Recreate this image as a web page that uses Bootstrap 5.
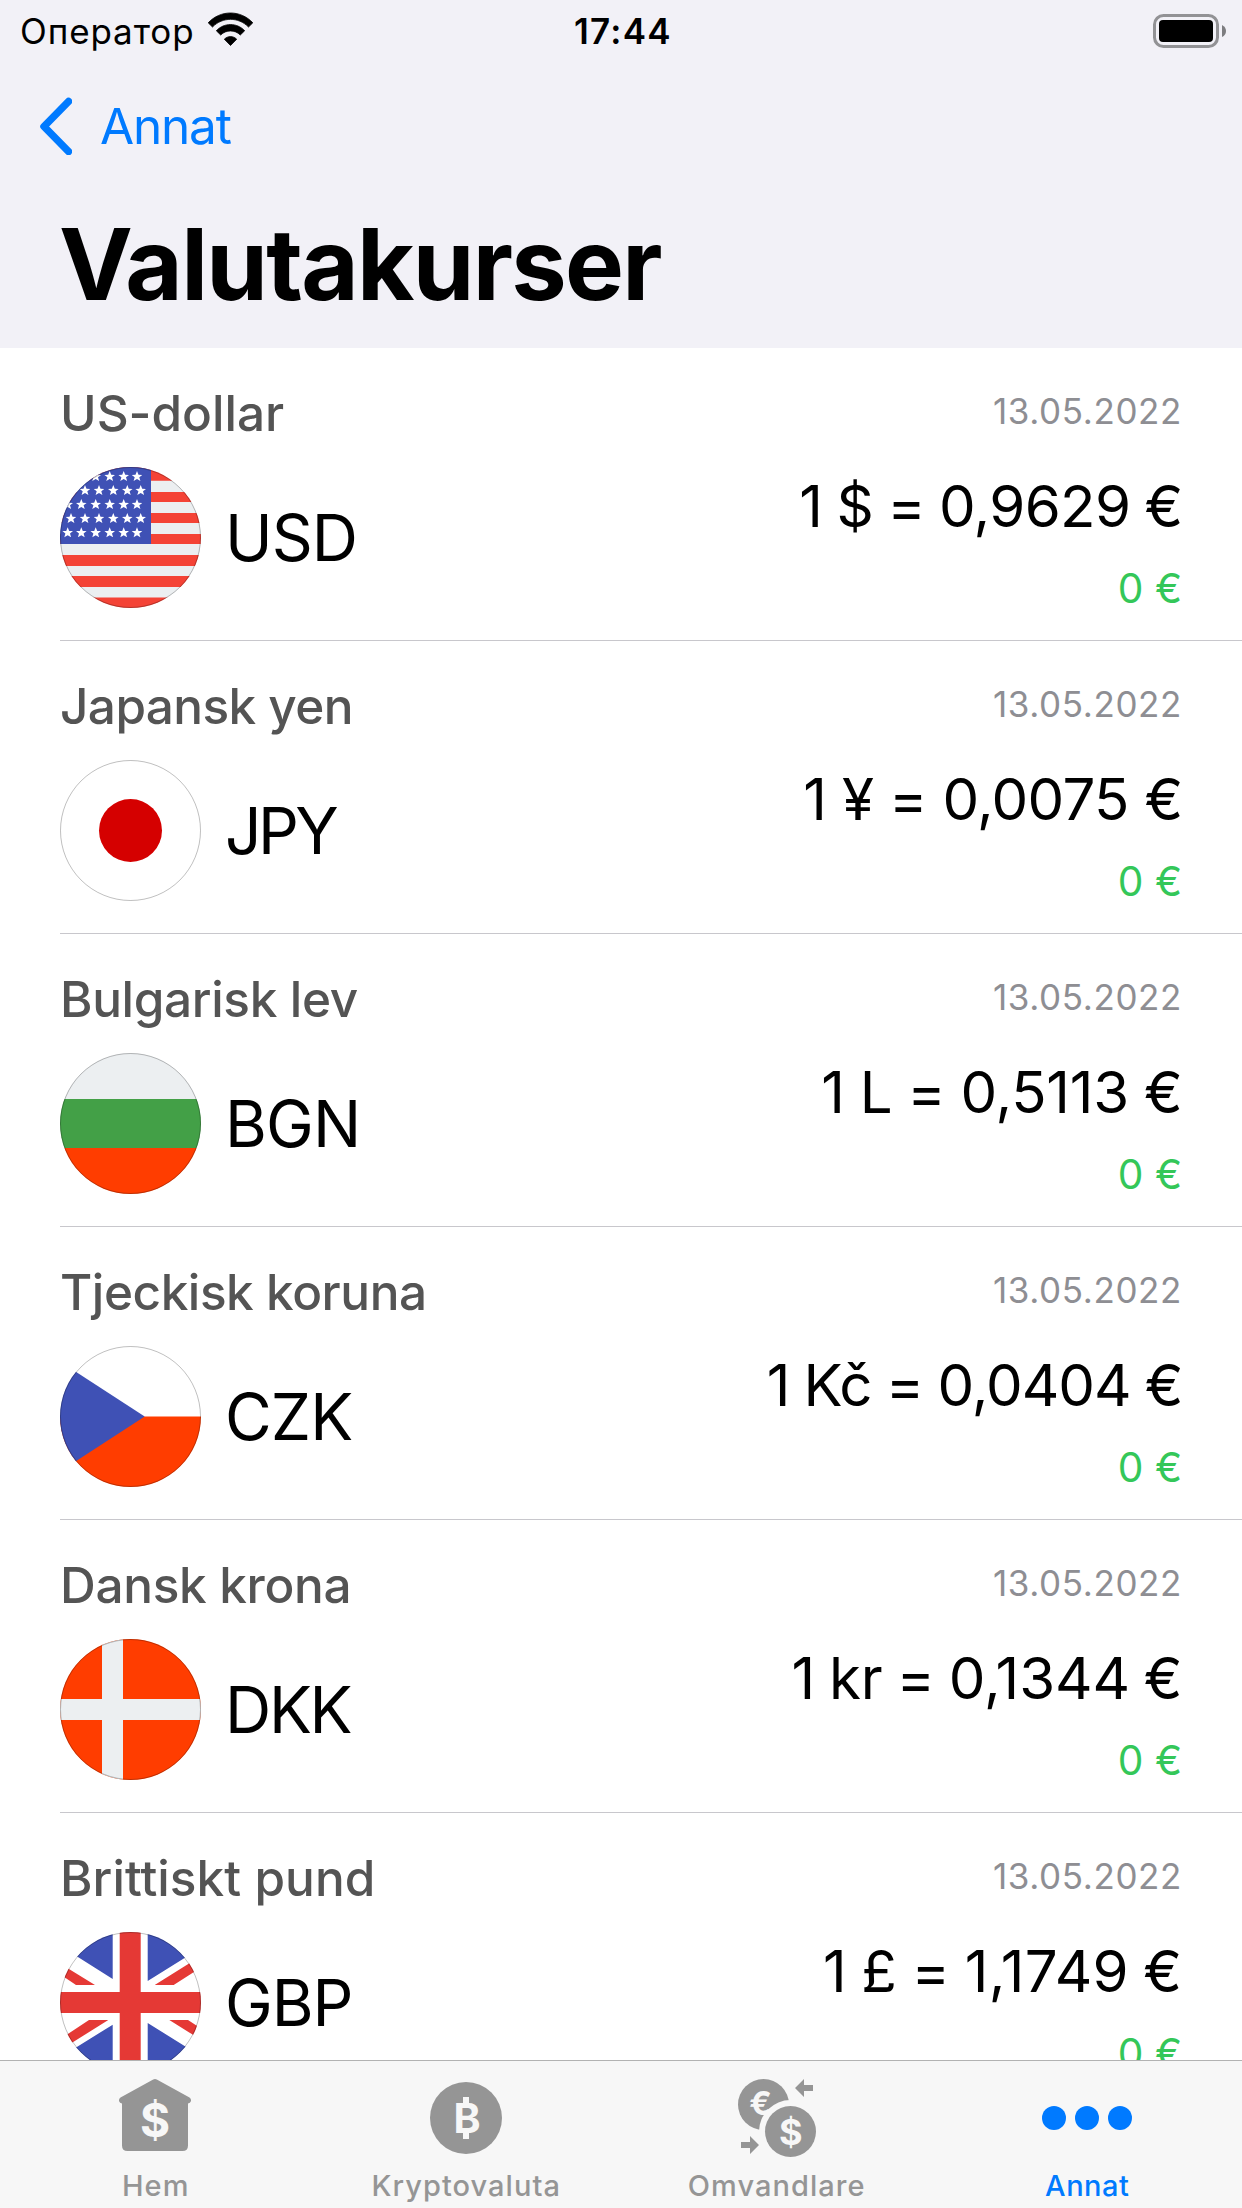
<!DOCTYPE html>
<html lang="sv">
<head>
<meta charset="utf-8">
<meta name="viewport" content="width=device-width, initial-scale=1">
<title>Valutakurser</title>
<link href="https://cdn.jsdelivr.net/npm/bootstrap@5.3.0/dist/css/bootstrap.min.css" rel="stylesheet">
<style>
  body { font-family: Inter, "Noto Sans", sans-serif; color: #000; background: #fff; }
  svg { display: block; flex: none; }
  .phone { width: 1242px; height: 2208px; }
  .app-head { background: #f2f1f7; height: 348px; }
  .status-bar { height: 62px; padding: 0 16px 0 20px; font-size: 35px; line-height: 62px; }
  .status-bar > div { flex: 1 1 0; }
  .carrier { letter-spacing: .9px; }
  .wifi { margin: -4px 0 0 12px; }
  .battery { margin-top: -1px; }
  .clock { font-weight: 600; letter-spacing: 1.26px; }
  .back-row { height: 132px; padding: 0 0 4px 39px; color: #007aff; font-size: 49.5px; letter-spacing: -1.2px; }
  .back-text { margin-left: 28px; }
  .screen-title { font-size: 99px; font-weight: 700; line-height: 120px; letter-spacing: -1.7px; padding: 10px 0 0 59px; }
  .rates { height: 1712px; }
  .rate-row { height: 293px; margin-left: 60px; padding-right: 62px; border-bottom: 1px solid #c8c7cc; }
  .cur-name { margin-top: 34px; font-size: 49.5px; line-height: 62px; font-weight: 500; color: #545454; }
  .cur-code { font-size: 64px; line-height: 78px; margin-left: 24px; }
  .flag-line { margin-top: 23px; }
  .cur-date { margin-top: 41px; font-size: 35px; line-height: 44px; letter-spacing: .61px; color: #8e8e93; margin-right: -2px; }
  .cur-rate { margin-top: 38px; font-size: 58.2px; line-height: 70px; margin-right: -2.5px; word-spacing: -1.6px; }
  .cur-delta { margin-top: 23px; font-size: 40.7px; line-height: 50px; color: #34c759; margin-right: -2px; }
  .r-usd .cur-name { letter-spacing: 0; }      .r-usd .cur-code { letter-spacing: -1px; }   .r-usd .cur-rate { letter-spacing: -.68px; }
  .r-jpy .cur-name { letter-spacing: -.6px; }  .r-jpy .cur-code { letter-spacing: -3.6px; } .r-jpy .cur-rate { letter-spacing: -.7px; word-spacing: 0; }
  .r-bgn .cur-name { letter-spacing: -.35px; } .r-bgn .cur-code { letter-spacing: -.8px; }  .r-bgn .cur-rate { letter-spacing: -.2px; word-spacing: -1.3px; }
  .r-czk .cur-name { letter-spacing: -.45px; } .r-czk .cur-code { letter-spacing: -.9px; }  .r-czk .cur-rate { letter-spacing: -1px; word-spacing: -1.2px; }
  .r-dkk .cur-name { letter-spacing: -.32px; } .r-dkk .cur-code { letter-spacing: -2.3px; } .r-dkk .cur-rate { letter-spacing: -.1px; word-spacing: -2.4px; }
  .r-gbp .cur-name { letter-spacing: .05px; }  .r-gbp .cur-code { letter-spacing: -1.1px; } .r-gbp .cur-rate { letter-spacing: .35px; word-spacing: -2.4px; }
  .tab-bar { height: 148px; background: #f7f7f7; border-top: 1px solid #b2b2b2; color: #959595; }
  .tab-bar a { flex: 1 1 0; color: inherit; padding-top: 18px; text-decoration: none; }
  .tab-bar a.current { color: #007aff; }
  .tab-text { font-size: 29px; line-height: 36px; font-weight: 500; margin: 11px 0 0 1px; letter-spacing: 1.05px; }
  .current .tab-text { letter-spacing: .52px; }
  .swap-icon { margin-left: 2px; }
</style>
<script src="https://cdn.jsdelivr.net/npm/bootstrap@5.3.0/dist/js/bootstrap.bundle.min.js"></script>
</head>
<body>
<svg width="0" height="0" class="position-absolute"><defs>
  <clipPath id="disc"><circle cx="70.5" cy="70.5" r="70.5"/></clipPath>
  <path id="star" fill="#fff" d="M0-5.4 1.5-1.8 5.3-1.6 2.3.8 3.4 4.6 0 2.5-3.4 4.6-2.3.8-5.3-1.6-1.5-1.8Z"/>
  <circle id="rim" cx="70.5" cy="70.5" r="70" fill="none" stroke="#000" stroke-opacity=".25"/>
</defs></svg>

<div class="phone d-flex flex-column overflow-hidden">
  <header class="app-head">
    <div class="status-bar d-flex align-items-center">
      <div class="d-flex align-items-center">
        <span class="carrier">Оператор</span>
        <svg class="wifi" width="47" height="35" viewBox="0 0 47 35"><path d="M1.2 10.800C13.500-2.300 33.500-2.300 45.800 10.800L41.500 15C31.500 4.800 15.500 4.800 5.500 15ZM9.300 18.700C17.200 10.500 29.800 10.500 37.700 18.700L33.300 23C28 17.600 19 17.600 13.700 23ZM17.300 27.200C21 23.700 26 23.700 29.700 27.200L23.500 33.500Z" fill="#000" stroke="#000" stroke-width=".8" stroke-linejoin="round"/></svg>
      </div>
      <div class="clock text-center">17:44</div>
      <div class="d-flex justify-content-end">
        <svg class="battery" width="74" height="34" viewBox="0 0 74 34"><rect x="2.500" y="1.500" width="63" height="31" rx="9" fill="none" stroke="#929295" stroke-width="3"/><rect x="7" y="6" width="54" height="22" rx="4"/><path d="M70 11v12q4-2 4-6t-4-6Z" fill="#7d7d80"/></svg>
      </div>
    </div>
    <div class="back-row d-flex align-items-center">
      <svg width="33" height="58" viewBox="0 0 33 58"><path d="M29.500 4.500 5 29.500 29.500 54.500" fill="none" stroke="#007aff" stroke-width="7.500" stroke-linecap="round" stroke-linejoin="round"/></svg>
      <span class="back-text">Annat</span>
    </div>
    <h1 class="screen-title m-0">Valutakurser</h1>
  </header>

  <main class="rates overflow-hidden flex-shrink-0">
    <div class="rate-row r-usd d-flex justify-content-between">
      <div>
        <div class="cur-name">US-dollar</div>
        <div class="flag-line d-flex align-items-center">
          <svg width="141" height="141" viewBox="0 0 141 141"><g clip-path="url(#disc)"><rect width="141" height="141" fill="#eceff1"/><path fill="#f44336" d="M0 0h141v13.700H0ZM0 25h141v10H0ZM0 46h141v10H0ZM0 67h141v10H0ZM0 88h141v11H0ZM0 109h141v11H0ZM0 130.500h141V141H0Z"/><rect width="91" height="77" fill="#3f51b5"/>
            <use href="#star" x="35.700" y="9.500"/><use href="#star" x="49.700" y="9.500"/><use href="#star" x="63.700" y="9.500"/><use href="#star" x="77" y="9.500"/>
            <use href="#star" x="25" y="23.500"/><use href="#star" x="39" y="23.500"/><use href="#star" x="53.300" y="23.500"/><use href="#star" x="67.300" y="23.500"/><use href="#star" x="80.700" y="23.500"/>
            <use href="#star" x="7.700" y="37.500"/><use href="#star" x="21.300" y="37.500"/><use href="#star" x="35.700" y="37.500"/><use href="#star" x="49.700" y="37.500"/><use href="#star" x="63.700" y="37.500"/><use href="#star" x="77" y="37.500"/>
            <use href="#star" x="11" y="51.500"/><use href="#star" x="25" y="51.500"/><use href="#star" x="39" y="51.500"/><use href="#star" x="53.300" y="51.500"/><use href="#star" x="67.300" y="51.500"/><use href="#star" x="80.700" y="51.500"/>
            <use href="#star" x="7.700" y="65.700"/><use href="#star" x="21.300" y="65.700"/><use href="#star" x="35.700" y="65.700"/><use href="#star" x="49.700" y="65.700"/><use href="#star" x="63.700" y="65.700"/><use href="#star" x="77" y="65.700"/>
          </g><use href="#rim"/></svg>
          <div class="cur-code">USD</div>
        </div>
      </div>
      <div class="text-end">
        <div class="cur-date">13.05.2022</div>
        <div class="cur-rate">1 $ = 0,9629 €</div>
        <div class="cur-delta">0 €</div>
      </div>
    </div>

    <div class="rate-row r-jpy d-flex justify-content-between">
      <div>
        <div class="cur-name">Japansk yen</div>
        <div class="flag-line d-flex align-items-center">
          <svg width="141" height="141" viewBox="0 0 141 141"><circle cx="70.500" cy="70.500" r="31.500" fill="#d50000"/><use href="#rim"/></svg>
          <div class="cur-code">JPY</div>
        </div>
      </div>
      <div class="text-end">
        <div class="cur-date">13.05.2022</div>
        <div class="cur-rate">1 ¥ = 0,0075 €</div>
        <div class="cur-delta">0 €</div>
      </div>
    </div>

    <div class="rate-row r-bgn d-flex justify-content-between">
      <div>
        <div class="cur-name">Bulgarisk lev</div>
        <div class="flag-line d-flex align-items-center">
          <svg width="141" height="141" viewBox="0 0 141 141"><g clip-path="url(#disc)"><rect width="141" height="141" fill="#eceff1"/><rect y="46" width="141" height="49" fill="#43a047"/><rect y="95" width="141" height="46" fill="#ff3d00"/></g><use href="#rim"/></svg>
          <div class="cur-code">BGN</div>
        </div>
      </div>
      <div class="text-end">
        <div class="cur-date">13.05.2022</div>
        <div class="cur-rate">1 L = 0,5113 €</div>
        <div class="cur-delta">0 €</div>
      </div>
    </div>

    <div class="rate-row r-czk d-flex justify-content-between">
      <div>
        <div class="cur-name">Tjeckisk koruna</div>
        <div class="flag-line d-flex align-items-center">
          <svg width="141" height="141" viewBox="0 0 141 141"><g clip-path="url(#disc)"><rect y="70.500" width="141" height="71" fill="#ff3d00"/><path d="M0 15.400 84.700 70.500 0 125.600Z" fill="#3f51b5"/></g><use href="#rim"/></svg>
          <div class="cur-code">CZK</div>
        </div>
      </div>
      <div class="text-end">
        <div class="cur-date">13.05.2022</div>
        <div class="cur-rate">1 Kč = 0,0404 €</div>
        <div class="cur-delta">0 €</div>
      </div>
    </div>

    <div class="rate-row r-dkk d-flex justify-content-between">
      <div>
        <div class="cur-name">Dansk krona</div>
        <div class="flag-line d-flex align-items-center">
          <svg width="141" height="141" viewBox="0 0 141 141"><g clip-path="url(#disc)"><rect width="141" height="141" fill="#ff3d00"/><path d="M42 0h21v60h78v21H63v60H42V81H0V60h42Z" fill="#eceff1"/></g><use href="#rim"/></svg>
          <div class="cur-code">DKK</div>
        </div>
      </div>
      <div class="text-end">
        <div class="cur-date">13.05.2022</div>
        <div class="cur-rate">1 kr = 0,1344 €</div>
        <div class="cur-delta">0 €</div>
      </div>
    </div>

    <div class="rate-row r-gbp d-flex justify-content-between">
      <div>
        <div class="cur-name">Brittiskt pund</div>
        <div class="flag-line d-flex align-items-center">
          <svg width="141" height="141" viewBox="0 0 141 141"><g clip-path="url(#disc)"><rect width="141" height="141" fill="#fff"/>
            <path fill="#3f51b5" d="M52.700 47 10 20V0h42.700ZM87.700 49 131 22V0H87.700ZM52.700 92.700 10 119.200V141h42.700ZM87.700 91 131 118V141H87.700Z"/>
            <path fill="#e53935" d="M59.700 0h21v60H141v21H80.700v60h-21V81H0V60h59.700ZM35 53-5 28.400V38.800L16 53ZM94.700 53h19L146 32.200V21ZM29 88h19.300L0 118.300V107.200ZM109.300 88H128l18 11.700V111Z"/>
          </g><use href="#rim"/></svg>
          <div class="cur-code">GBP</div>
        </div>
      </div>
      <div class="text-end">
        <div class="cur-date">13.05.2022</div>
        <div class="cur-rate">1 £ = 1,1749 €</div>
        <div class="cur-delta">0 €</div>
      </div>
    </div>
  </main>

  <nav class="tab-bar d-flex flex-shrink-0 text-center">
    <a href="#" class="d-flex flex-column align-items-center">
      <svg width="78" height="78" viewBox="0 0 78 78" fill="currentColor"><path d="M37.200.6Q39-.5 40.800.6L73.500 18.600Q75.500 20 74.900 22.300 74.300 24.300 72 24.500V66.500Q72 72 66.500 72h-55Q6 72 6 66.500V24.500Q3.700 24.300 3.100 22.300 2.500 20 4.500 18.600Z"/><text x="39" y="57.500" text-anchor="middle" font-size="46" font-weight="700" fill="#f7f7f7">$</text></svg>
      <span class="tab-text">Hem</span>
    </a>
    <a href="#" class="d-flex flex-column align-items-center">
      <svg width="78" height="78" viewBox="0 0 78 78"><circle cx="39" cy="39" r="36" fill="currentColor"/><path d="M36 18h6v8h-6ZM36 52h6v8h-6Z" fill="#f7f7f7"/><text x="40" y="54" text-anchor="middle" font-size="41" font-weight="700" fill="#f7f7f7">B</text></svg>
      <span class="tab-text">Kryptovaluta</span>
    </a>
    <a href="#" class="d-flex flex-column align-items-center">
      <svg class="swap-icon" width="78" height="78" viewBox="0 0 78 78" fill="currentColor"><circle cx="25.500" cy="25.500" r="25.500"/><text x="22.500" y="36" text-anchor="middle" font-size="33" font-weight="700" fill="#f7f7f7">€</text><circle cx="52.500" cy="52.500" r="31.500" fill="#f7f7f7"/><circle cx="52.500" cy="52.500" r="25.500"/><text x="52.700" y="65.500" text-anchor="middle" font-size="36" font-weight="700" fill="#f7f7f7">$</text><path d="M57 9 66 0v6h9v6h-9v6ZM21 66l-9 9v-6H3v-6h9v-6Z"/></svg>
      <span class="tab-text">Omvandlare</span>
    </a>
    <a href="#" class="current d-flex flex-column align-items-center">
      <svg width="90" height="78" viewBox="0 0 90 78" fill="currentColor"><circle cx="12" cy="39" r="12"/><circle cx="45" cy="39" r="12"/><circle cx="78" cy="39" r="12"/></svg>
      <span class="tab-text">Annat</span>
    </a>
  </nav>
</div>
</body>
</html>
